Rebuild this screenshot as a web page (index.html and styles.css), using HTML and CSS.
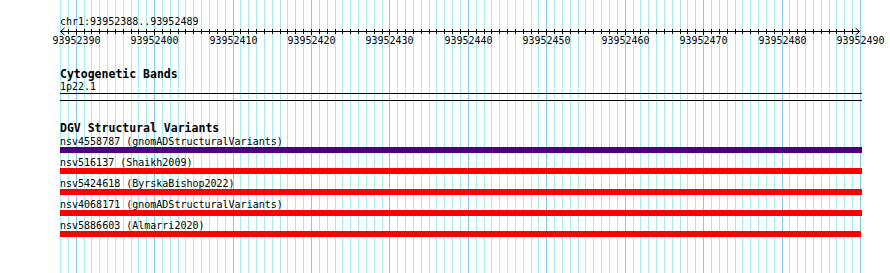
FILE: index.html
```html
<!DOCTYPE html>
<html lang="en">
<head>
    <meta charset="UTF-8">
    <meta name="viewport" content="width=device-width, initial-scale=1.0">
    <title>chr1:93952388..93952489</title>
    <link rel="stylesheet" href="styles.css">
</head>
<body>
    <div class="browser">
        <svg class="guides" id="guides" width="890" height="273"></svg>
        <div class="tracks">
            <svg class="ruler" id="ruler" width="802" height="48">
                <text class="ruler-text" x="0" y="25">chr1:93952388..93952489</text>
                <line class="axis" x1="0" y1="31.5" x2="800" y2="31.5"/>
                <polyline class="arrow" points="4.5,28 0.5,31.5 4.5,35"/>
                <polyline class="arrow" points="795.5,28 799.5,31.5 795.5,35"/>
            </svg>

            <div class="track">
                <h2 class="track-title">Cytogenetic Bands</h2>
                <div class="feature-label">1p22.1</div>
                <div class="band"></div>
            </div>

            <div class="track track-dgv">
                <h2 class="track-title">DGV Structural Variants</h2>
                <div class="sv">
                    <div class="feature-label">nsv4558787 (gnomADStructuralVariants)</div>
                    <div class="sv-bar gain-loss"></div>
                </div>
                <div class="sv">
                    <div class="feature-label">nsv516137 (Shaikh2009)</div>
                    <div class="sv-bar"></div>
                </div>
                <div class="sv">
                    <div class="feature-label">nsv5424618 (ByrskaBishop2022)</div>
                    <div class="sv-bar"></div>
                </div>
                <div class="sv">
                    <div class="feature-label">nsv4068171 (gnomADStructuralVariants)</div>
                    <div class="sv-bar"></div>
                </div>
                <div class="sv">
                    <div class="feature-label">nsv5886603 (Almarri2020)</div>
                    <div class="sv-bar" style="width: 801px"></div>
                </div>
            </div>
        </div>
    </div>
    <script>
        const svgNS = 'http://www.w3.org/2000/svg';
        const guides = document.getElementById('guides');
        const ruler = document.getElementById('ruler');
        const firstBase = 93952388;
        const bases = 102;
        const trackWidth = 800;
        const left = 60;

        function add(parent, tag, attrs) {
            const el = document.createElementNS(svgNS, tag);
            for (const key in attrs) el.setAttribute(key, attrs[key]);
            parent.appendChild(el);
            return el;
        }

        // one guide line and one tick per base, a label every 10 bases
        for (let k = 0; k <= bases; k++) {
            const x = Math.round(k * trackWidth / bases) + 0.5;
            const major = (firstBase + k) % 10 === 0;
            add(guides, 'line', {
                x1: left + x, y1: 0, x2: left + x, y2: 273,
                class: major ? 'guide major' : 'guide'
            });
            if (k > 0 && k < bases) {
                add(ruler, 'line', { x1: x, y1: 29, x2: x, y2: major ? 35 : 34, class: 'tick' });
            }
            if (major) {
                const label = add(ruler, 'text', { x: x, y: 44, class: 'ruler-text ruler-num' });
                label.textContent = firstBase + k;
            }
        }
    </script>
</body>
</html>
```

FILE: styles.css
```css
body {
    margin: 0;
    background-color: white;
}
.browser {
    position: relative;
    width: 890px;
    height: 273px;
    overflow: hidden;
}
.guides {
    position: absolute;
    left: 0;
    top: 0;
}
.guide {
    stroke: #a4eaee;
    stroke-width: 1;
    shape-rendering: crispEdges;
}
.guide.major {
    stroke: #7ecbeb;
}
.tracks {
    position: relative;
    margin-left: 60px;
    width: 802px;
    font-family: "DejaVu Sans Mono", monospace;
    color: black;
}
.ruler {
    display: block;
    overflow: visible;
}
.ruler-text {
    font-family: "DejaVu Sans Mono", monospace;
    font-size: 10px;
    fill: black;
}
.ruler-num {
    text-anchor: middle;
}
.axis, .tick, .arrow {
    stroke: black;
    stroke-width: 1;
    fill: none;
    shape-rendering: crispEdges;
}
.arrow {
    shape-rendering: auto;
}
.track-title {
    margin: 20px 0 1px 0;
    font-size: 11.5px;
    line-height: 12px;
    font-weight: bold;
}
.track-dgv .track-title {
    margin-top: 21px;
    margin-bottom: 2px;
}
.feature-label {
    font-size: 10px;
    line-height: 11px;
    white-space: nowrap;
}
.band {
    margin-top: 1px;
    height: 6px;
    border-top: 1px solid black;
    border-bottom: 1px solid black;
}
.sv {
    margin-bottom: 4px;
}
.sv-bar {
    height: 6px;
    background-color: red;
}
.sv-bar.gain-loss {
    background-color: #4b0082;
}
```
